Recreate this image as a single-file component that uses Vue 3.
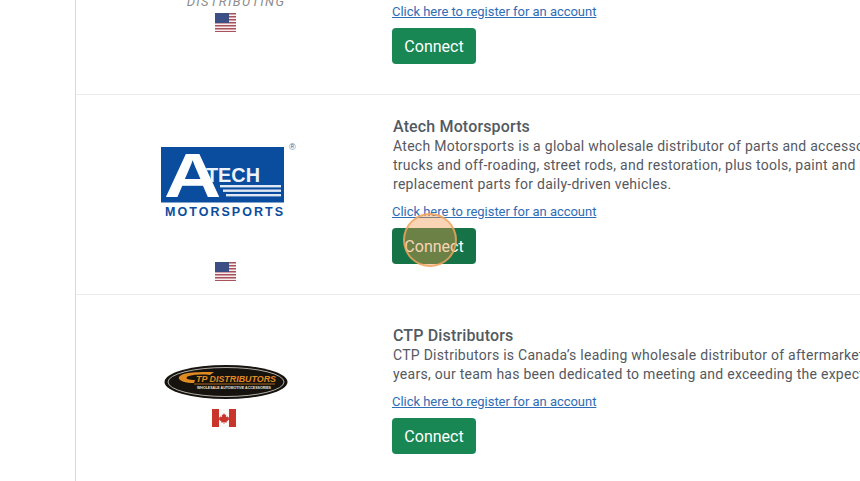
<script setup>
const stripes = [0, 3, 6, 9, 12, 15, 18]
</script>

<template>
  <div class="page">
    <aside class="rail"></aside>
    <main class="list">
      <section class="row row-first">
        <div class="brand">
          <span class="wordmark">DISTRIBUTING</span>
          <svg class="flag" width="21" height="19" viewBox="0 0 21 19">
            <rect width="21" height="19" fill="#f6eeee" />
            <rect v-for="s in stripes" :key="s" y="0" :transform="`translate(0 ${s})`" width="21" height="1.5" fill="#a8525c" />
            <rect width="14" height="10" fill="#3b4f85" />
          </svg>
        </div>
        <div class="info">
          <a class="reg">Click here to register for an account</a>
          <button class="connect">Connect</button>
        </div>
      </section>

      <section class="row row-atech">
        <div class="brand">
          <svg class="logo" width="145" height="80" viewBox="0 0 145 80">
            <rect x="6" y="7" width="123" height="55.5" fill="#0a4d9e" />
            <rect x="65" y="45" width="61" height="2.4" fill="#dfe8f3" />
            <rect x="68" y="49.5" width="58" height="2.4" fill="#dfe8f3" />
            <rect x="71" y="54" width="55" height="2.4" fill="#dfe8f3" />
            <text class="atech-a" transform="translate(9 57) scale(1.28 1)" font-size="62">A</text>
            <text class="atech-t" x="51" y="41.5" font-size="21" textLength="54" lengthAdjust="spacingAndGlyphs">TECH</text>
            <text class="atech-m" x="10" y="76" font-size="12.5" textLength="118" lengthAdjust="spacing">MOTORSPORTS</text>
            <text class="atech-r" x="134" y="10" font-size="9">®</text>
          </svg>
          <svg class="flag flag-atech" width="21" height="19" viewBox="0 0 21 19">
            <rect width="21" height="19" fill="#f6eeee" />
            <rect v-for="s in stripes" :key="s" y="0" :transform="`translate(0 ${s})`" width="21" height="1.5" fill="#a8525c" />
            <rect width="14" height="10" fill="#3b4f85" />
          </svg>
        </div>
        <div class="info">
          <h3 class="name">Atech Motorsports</h3>
          <p class="desc">
            <span>Atech Motorsports is a global wholesale distributor of parts and accessories for</span>
            <span>trucks and off-roading, street rods, and restoration, plus tools, paint and body</span>
            <span>replacement parts for daily-driven vehicles.</span>
          </p>
          <a class="reg">Click here to register for an account</a>
          <button class="connect connect-hover">Connect</button>
        </div>
      </section>

      <section class="row row-ctp">
        <div class="brand">
          <svg class="logo" width="124" height="36" viewBox="0 0 124 36">
            <ellipse cx="62" cy="18" rx="61.5" ry="17" fill="#16130f" />
            <ellipse cx="62" cy="18" rx="58" ry="14.5" fill="none" stroke="#d8d4cc" stroke-width="0.8" />
            <path d="M30 19 C12 19 10 11 24 9 C30 8 38 8 50 8 L46 11 C36 10 26 11 23 13 C21 15 25 16 31 16 Z" fill="#e08a24" />
            <text class="ctp-t" x="32" y="18" font-size="8.5" textLength="80" lengthAdjust="spacingAndGlyphs">TP DISTRIBUTORS</text>
            <rect x="30" y="19.5" width="81" height="1" fill="#a8651c" />
            <text class="ctp-s" x="33" y="25" font-size="3.6" textLength="74" lengthAdjust="spacingAndGlyphs">WHOLESALE AUTOMOTIVE ACCESSORIES</text>
          </svg>
          <svg class="flag flag-ca" width="24" height="18" viewBox="0 0 24 18">
            <rect width="24" height="18" fill="#fbf8f8" />
            <rect width="7" height="18" fill="#c9352b" />
            <rect x="17" width="7" height="18" fill="#c9352b" />
            <path d="M12 4 L13 6 L14.2 5.5 L13.9 8.2 L15.4 7.2 L16 8.4 L17.2 8.2 L16.7 10 L17.2 10.5 L14.6 12.6 L14.9 13.5 L12.3 13.2 L12.3 15 L11.7 15 L11.7 13.2 L9.1 13.5 L9.4 12.6 L6.8 10.5 L7.3 10 L6.8 8.2 L8 8.4 L8.6 7.2 L10.1 8.2 L9.8 5.5 L11 6 Z" fill="#c9352b" />
          </svg>
        </div>
        <div class="info">
          <h3 class="name">CTP Distributors</h3>
          <p class="desc">
            <span>CTP Distributors is Canada’s leading wholesale distributor of aftermarket accessories. For over 30</span>
            <span>years, our team has been dedicated to meeting and exceeding the expectations of our customers.</span>
          </p>
          <a class="reg">Click here to register for an account</a>
          <button class="connect">Connect</button>
        </div>
      </section>
    </main>
    <span class="pulse"></span>
  </div>
</template>

<style>
html, body { margin: 0; overflow: hidden; background: #fff; }
</style>

<style scoped>
.page {
  position: relative;
  display: flex;
  width: 860px;
  height: 481px;
  overflow: hidden;
  font-family: Roboto, "Liberation Sans", sans-serif;
  background: #fff;
}
.rail { flex: 0 0 75px; border-right: 1px solid #d9d9d9; }
.list { flex: 1; min-width: 0; }
.row {
  display: flex;
  height: 200px;
  box-sizing: border-box;
  border-bottom: 1px solid #ececec;
}
.row-first { height: 95px; align-items: flex-end; padding-bottom: 30px; }
.row-first .brand { padding-bottom: 32px; }
.brand {
  flex: 0 0 300px;
  display: flex;
  flex-direction: column;
  align-items: center;
}
.wordmark {
  height: 14px;
  line-height: 5px;
  margin-left: 20px;
  font-size: 13px;
  font-style: italic;
  letter-spacing: 1.35px;
  color: #8d8d8d;
  white-space: nowrap;
}
.logo { display: block; }
.row-atech .logo { margin: 45px 0 0 3px; }
.flag { display: block; margin-left: -2px; }
.flag-atech { margin-top: 42px; }
.row-ctp .logo { margin-top: 69px; }
.flag.flag-ca { margin: 9px 0 0 -5px; }
.info {
  flex: 1;
  min-width: 0;
  padding-left: 16px;
  overflow: hidden;
  display: flex;
  flex-direction: column;
  align-items: flex-start;
}
.row-atech .info { padding-top: 22px; }
.row-ctp .info { padding-top: 31px; }
.name {
  margin: 0 0 1px;
  font-size: 16px;
  line-height: 19px;
  font-weight: 500;
  letter-spacing: 0.15px;
  color: #525a62;
  padding-left: 1px;
}
.desc {
  margin: 0 0 10px;
  padding-left: 1px;
  font-size: 14px;
  line-height: 19px;
  letter-spacing: 0.27px;
  color: #55595f;
}
.desc span { display: block; white-space: nowrap; }
.reg {
  font-size: 13px;
  line-height: 16px;
  letter-spacing: -0.03px;
  color: #2f6db5;
  text-decoration: underline;
  margin-bottom: 8px;
}
.connect {
  width: 84px;
  height: 36px;
  padding: 0;
  border: none;
  border-radius: 4px;
  background: #198754;
  color: #fff;
  font: 400 16px Roboto, "Liberation Sans", sans-serif;
}
.connect-hover { background: #157347; }
.pulse {
  position: absolute;
  left: 403px;
  top: 213px;
  width: 54px;
  height: 54px;
  box-sizing: border-box;
  border-radius: 50%;
  background: rgba(240, 150, 70, 0.4);
  border: 2px solid rgba(240, 165, 95, 0.8);
}
.atech-a { font-family: "Liberation Sans", sans-serif; font-weight: 700; fill: #fff; }
.atech-t { font-family: "Liberation Sans", sans-serif; font-weight: 700; fill: #eef3f9; }
.atech-m { font-family: "Liberation Sans", sans-serif; font-weight: 700; fill: #0a4d9e; }
.atech-r { font-family: "Liberation Sans", sans-serif; fill: #3e6ea8; }
.ctp-t { font-family: "Liberation Sans", sans-serif; font-weight: 700; font-style: italic; fill: #e08a24; }
.ctp-s { font-family: "Liberation Sans", sans-serif; font-weight: 700; fill: #e8e4dc; }
</style>
